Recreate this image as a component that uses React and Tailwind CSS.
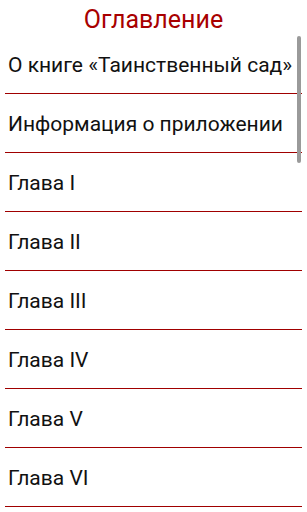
import React from 'react';

const items = [
  'О книге «Таинственный сад»',
  'Информация о приложении',
  'Глава I',
  'Глава II',
  'Глава III',
  'Глава IV',
  'Глава V',
  'Глава VI',
];

export default function App() {
  return (
    <div className="relative w-[307px] h-[512px] overflow-hidden bg-white" style={{ fontFamily: 'Roboto, "Noto Sans", sans-serif' }}>
      {/* Header */}
      <div className="h-[35px] flex items-center justify-center pt-[4px]">
        <h1 className="text-[25px] leading-none text-[#a80000]">Оглавление</h1>
      </div>

      {/* List */}
      <ul>
        {items.map((item) => (
          <li
            key={item}
            className="h-[59px] mx-[5px] pl-[3px] pt-[3px] flex items-center border-b border-[#a00000] text-[21px] text-[#111] whitespace-nowrap"
          >
            {item}
          </li>
        ))}
      </ul>

      {/* Scrollbar */}
      <div className="absolute right-[6px] top-[36px] w-[4px] h-[127px] rounded-full bg-[#9a9a9a]" />
    </div>
  );
}
